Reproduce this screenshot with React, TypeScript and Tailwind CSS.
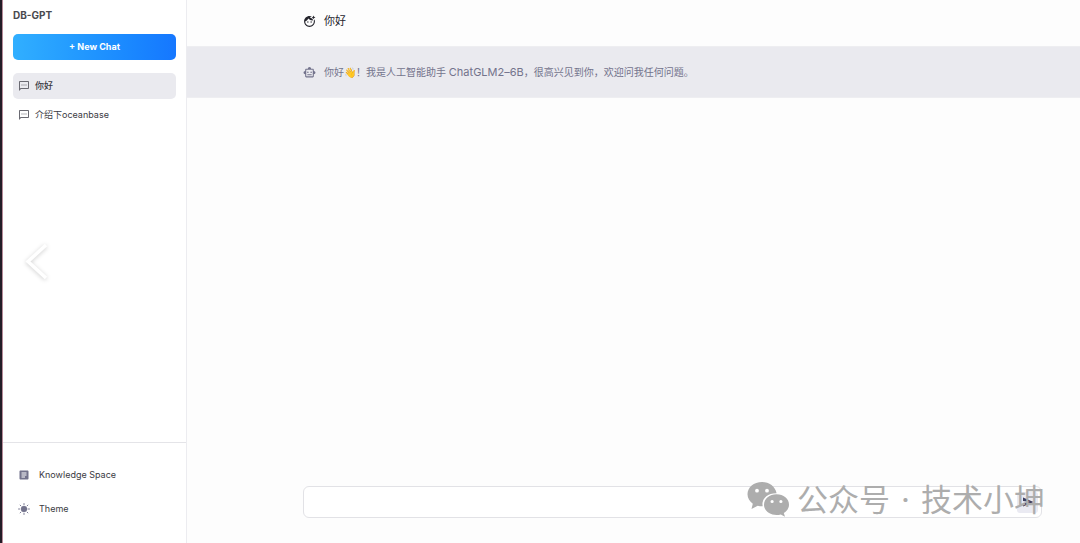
import React, { useState } from "react";
import {
  MdArticle,
  MdFaceRetouchingNatural,
  MdOutlineSmartToy,
  MdOutlineSms,
  MdSend,
} from "react-icons/md";

interface Chat {
  id: string;
  title: string;
}

interface Message {
  id: string;
  role: "human" | "ai";
  content: React.ReactNode;
}

const chats: Chat[] = [
  { id: "1", title: "你好" },
  { id: "2", title: "介绍下oceanbase" },
];

const messages: Message[] = [
  { id: "m1", role: "human", content: "你好" },
  {
    id: "m2",
    role: "ai",
    content: (
      <>
        你好👋！我是人工智能助手 <span className="text-[11px]">ChatGLM2–6B</span>
        ，很高兴见到你，欢迎问我任何问题。
      </>
    ),
  },
];

const SunIcon: React.FC = () => (
  <svg
    className="h-3 w-3 text-[#73738c]"
    viewBox="0 0 24 24"
    fill="none"
    stroke="currentColor"
    strokeWidth="1.8"
    strokeLinecap="round"
  >
    <circle cx="12" cy="12" r="5.500" fill="currentColor" />
    <path d="M12 1v2.500M12 20.500V23M1 12h2.500M20.500 12H23M4.200 4.200 6 6M18 18l1.800 1.800M4.200 19.800 6 18M18 6l1.800-1.800" />
  </svg>
);

const Sidebar: React.FC = () => {
  const [active, setActive] = useState("1");

  return (
    <aside className="flex w-[185px] shrink-0 flex-col border-r border-l border-r-[#ececf0] border-l-[#b58a98] bg-white text-[9px] leading-[14px] text-[#3a3a42]">
      <h1 className="px-2.5 pt-2 text-[10px] font-bold text-[#4a4a4f]">DB-GPT</h1>
      <div className="px-2.5 pt-3">
        <button
          type="button"
          className="h-[26px] w-full rounded-[5px] bg-linear-to-r from-[#31afff] to-[#1677ff] font-bold text-white"
        >
          + New Chat
        </button>
      </div>
      <ul className="flex flex-1 flex-col gap-[3px] px-2.5 pt-[13px]">
        {chats.map((chat) => (
          <li key={chat.id}>
            <button
              type="button"
              onClick={() => setActive(chat.id)}
              className={`flex h-[26px] w-full items-center gap-[5px] rounded-[5px] px-[5px] ${
                chat.id === active ? "bg-[#eaeaef] font-medium" : ""
              }`}
            >
              <MdOutlineSms className="h-3 w-3 text-[#6a6a72]" />
              {chat.title}
            </button>
          </li>
        ))}
      </ul>
      <nav className="flex flex-col gap-5 border-t border-[#e4e4e8] px-[15px] pt-[25px] pb-[27px]">
        <a href="#knowledge" className="flex items-center gap-[9px]">
          <MdArticle className="h-3 w-3 text-[#73738c]" />
          Knowledge Space
        </a>
        <button type="button" className="flex items-center gap-[9px]">
          <SunIcon />
          Theme
        </button>
      </nav>
    </aside>
  );
};

const MessageRow: React.FC<{ message: Message }> = ({ message }) => {
  const isAi = message.role === "ai";

  return (
    <div
      className={`flex items-center gap-2 pr-[38px] pl-[116px] ${
        isAi
          ? "h-[52px] border-y border-[#eeeef1] bg-[#eaeaef] text-[10px] text-[#73738c]"
          : "h-[46px] pb-1 text-[11px] text-[#25252d]"
      }`}
    >
      {isAi ? (
        <MdOutlineSmartToy className="h-[13px] w-[13px] shrink-0" />
      ) : (
        <MdFaceRetouchingNatural className="h-[13px] w-[13px] shrink-0" />
      )}
      <p>{message.content}</p>
    </div>
  );
};

const Watermark: React.FC = () => (
  <div className="pointer-events-none absolute right-[35px] bottom-5 flex items-center gap-2 text-[#adadad]">
    <svg className="h-9 w-[42px]" viewBox="0 0 42 36" fill="currentColor">
      <path
        fillRule="evenodd"
        d="M15 0C6.800 0 .5 5.300 .5 12.200c0 3.900 2.100 7.200 5.300 9.500L4.500 27l6.200-3.200c1.500.4 3 .5 5 .5-1.700-7.200 4.800-13.200 13.900-13C28.300 4.500 22.300 0 15 0Zm-5 6.800a1.900 1.900 0 1 1 0 3.800 1.900 1.900 0 0 1 0-3.800Zm10 0a1.900 1.900 0 1 1 0 3.800 1.900 1.900 0 0 1 0-3.800Z"
      />
      <path
        fillRule="evenodd"
        d="M29.500 12.300c-7 0-12.500 4.600-12.500 10.400s5.500 10.300 12.500 10.300c1.500 0 3-.2 4.300-.6l4.200 2.300-1.200-3.800c3.200-1.900 5.200-4.800 5.200-8.200 0-5.800-5.500-10.400-12.500-10.400Zm-4.400 5.600a1.600 1.600 0 1 1 0 3.200 1.600 1.600 0 0 1 0-3.200Zm8.800 0a1.600 1.600 0 1 1 0 3.200 1.600 1.600 0 0 1 0-3.200Z"
      />
    </svg>
    <div className="flex text-[31px] leading-[46px] whitespace-nowrap">
      <span>公众号</span>
      <span className="w-[31px] text-center">·</span>
      <span>技术小坤</span>
    </div>
  </div>
);

const App: React.FC = () => {
  const [input, setInput] = useState("");

  return (
    <div className="relative flex min-h-screen border-l-2 border-[#231d27] bg-[#fdfdfd] font-[Inter,'Noto_Sans_CJK_SC',sans-serif]">
      <Sidebar />
      <button
        type="button"
        aria-label="Previous"
        className="absolute top-[241px] left-5 text-white drop-shadow-[0_1px_2px_rgba(0,0,0,0.2)]"
      >
        <svg className="h-10 w-7" viewBox="0 0 28 40" fill="none" stroke="currentColor" strokeWidth="3.500">
          <path d="M24 4 6 20.500 24 37" />
        </svg>
      </button>
      <main className="flex min-w-0 flex-1 flex-col">
        <div className="flex-1">
          {messages.map((message) => (
            <MessageRow key={message.id} message={message} />
          ))}
        </div>
        <form
          className="pr-[38px] pb-[25px] pl-[116px]"
          onSubmit={(e) => e.preventDefault()}
        >
          <div className="flex h-8 items-center rounded-md border border-[#e2e2e6] bg-white pr-[3px]">
            <input
              aria-label="Message"
              value={input}
              onChange={(e) => setInput(e.target.value)}
              className="h-full min-w-0 flex-1 px-2 text-[10px] outline-none"
            />
            <button
              type="submit"
              aria-label="Send"
              className="flex h-[21px] w-[21px] items-center justify-center rounded-[3px] bg-[#eaeaf2] text-[#3c3c5c]"
            >
              <MdSend className="h-3 w-3" />
            </button>
          </div>
        </form>
      </main>
      <Watermark />
    </div>
  );
};

export default App;
